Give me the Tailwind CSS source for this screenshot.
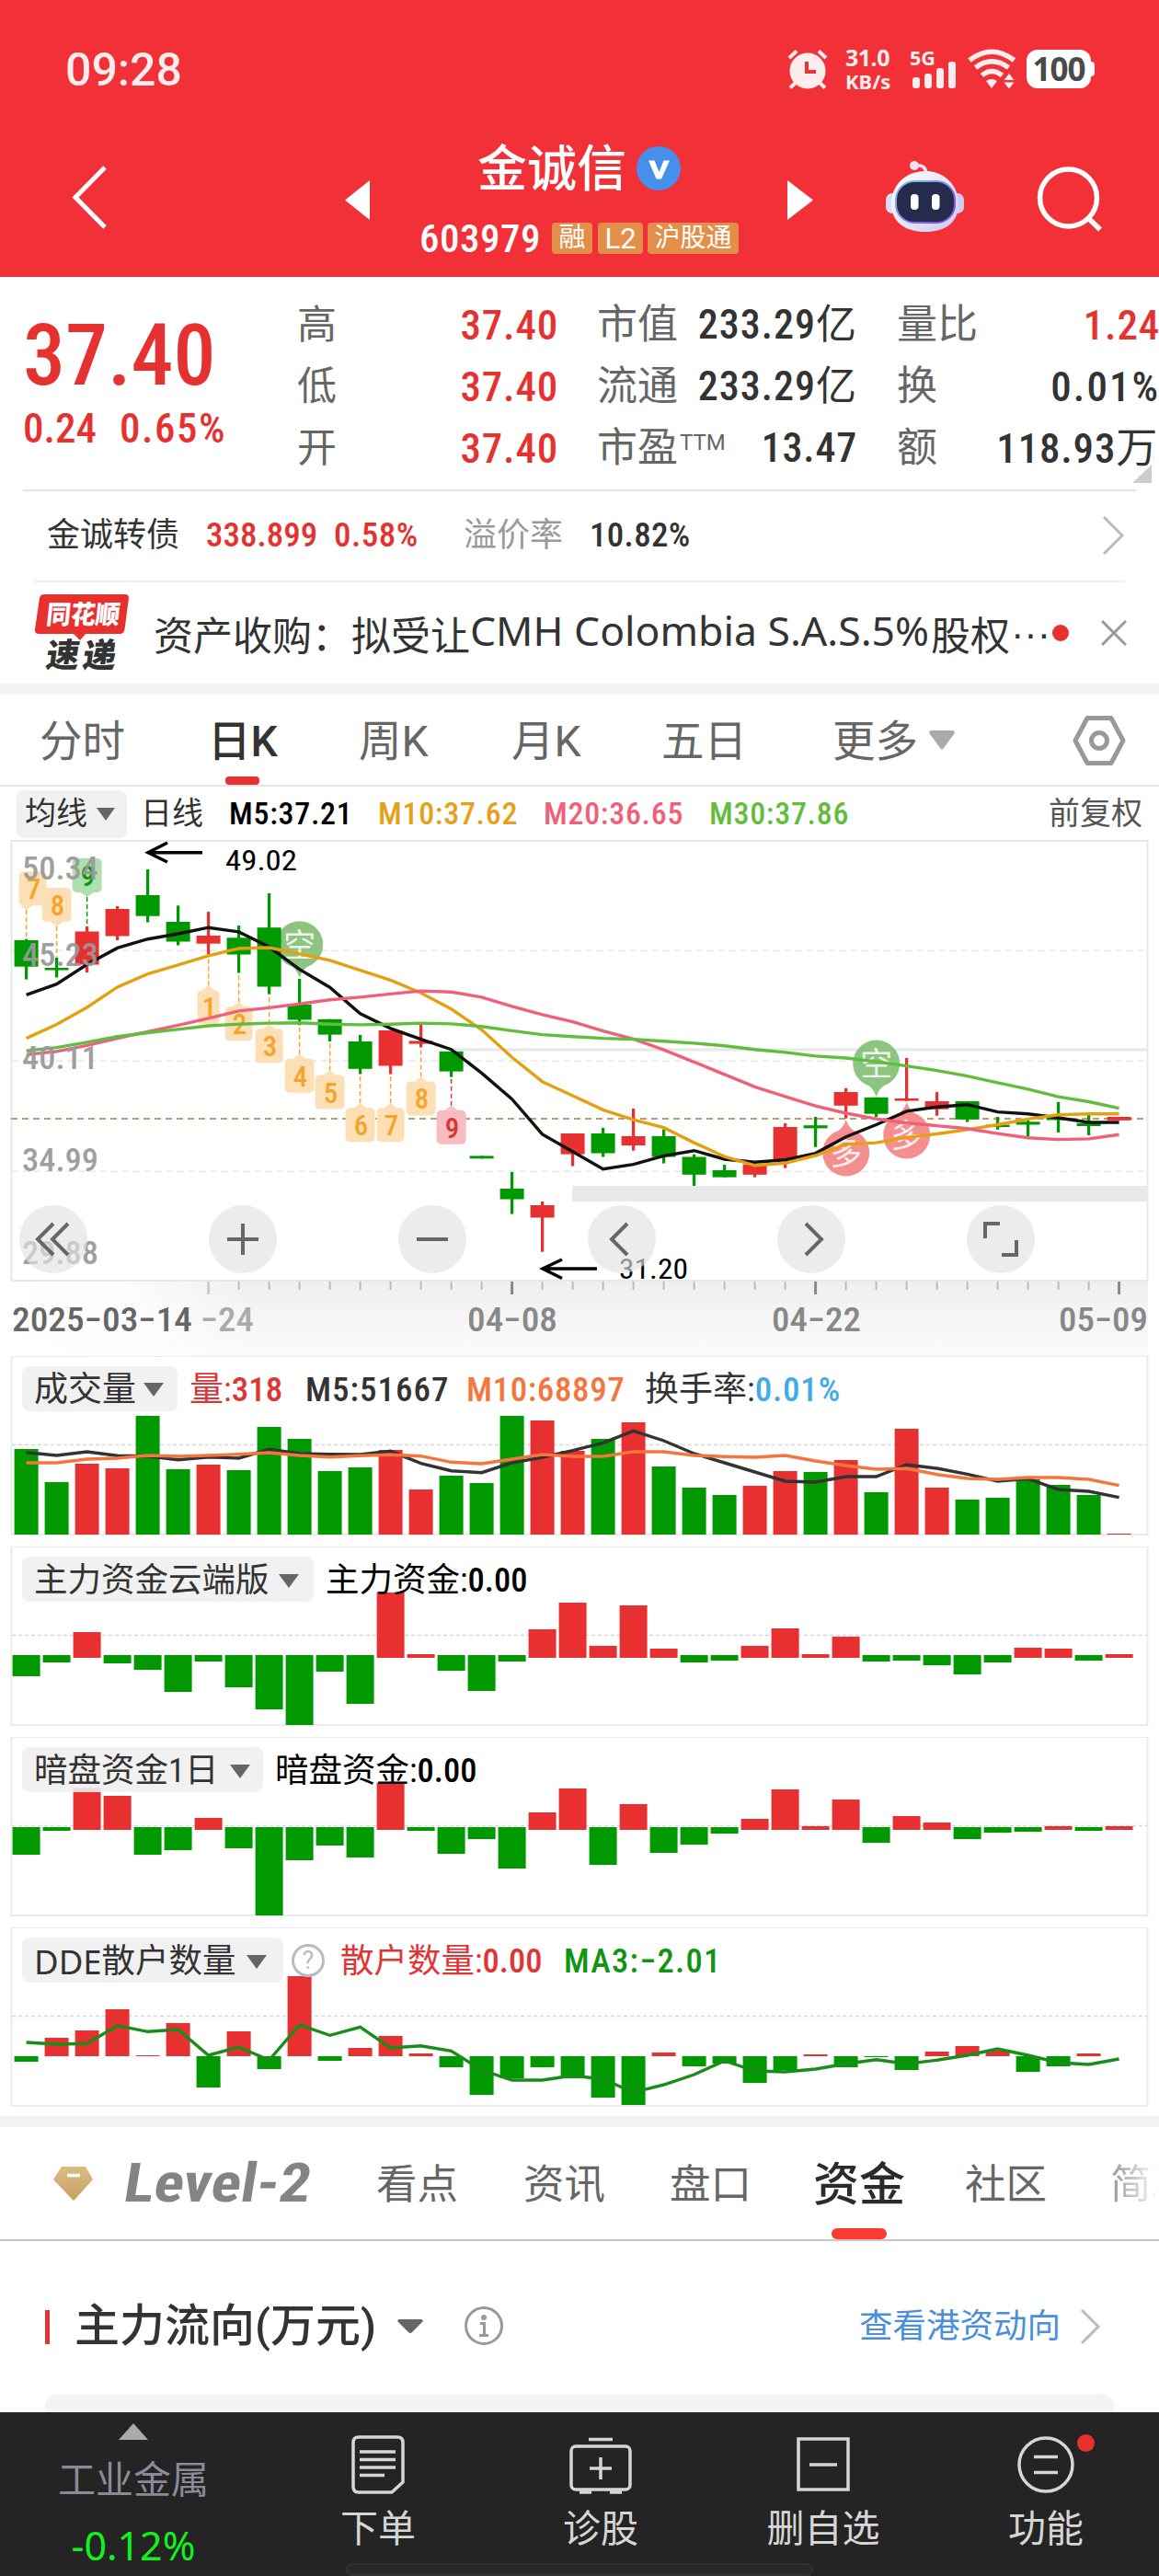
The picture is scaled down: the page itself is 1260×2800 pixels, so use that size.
<!DOCTYPE html>
<html lang="zh-CN">
<head>
    <meta charset="UTF-8">
    <meta name="viewport" content="width=device-width, initial-scale=1.0">
    <title>金诚信 603979</title>
    <script src="https://cdn.jsdelivr.net/npm/@tailwindcss/browser@4"></script>
</head>
<body class="bg-white font-['Roboto','Noto_Sans_CJK_SC',sans-serif] font-stretch-75% text-[#333] w-[1260px] h-[2800px] overflow-hidden flex flex-col whitespace-nowrap">

    <!-- Status bar + title -->
    <header class="h-[301px] shrink-0 bg-[#f23038] text-white">
        <div class="h-[150px] flex items-start">
            <div class="ml-[71px] mt-[46px] w-[140px] text-[50px] leading-[60px] font-medium font-stretch-100% text-[#ffedee]">09:28</div>
            <svg class="ml-[644px] mt-[53px] w-[46px] h-[46px]" viewBox="0 0 46 46" fill="none" stroke="#ffedee" stroke-width="5" stroke-linecap="butt">
                <circle cx="23" cy="24" r="19.5" fill="#ffedee" stroke="none"/>
                <path d="M3 10L11 2.500M43 10L35 2.500M4 42.500L12 35M42 42.500L34 35" stroke-width="4"/>
                <path d="M22 14v11h10" stroke="#f23038" stroke-width="4"/>
            </svg>
            <div class="ml-[18px] mt-[50px] w-[62px] text-[25px] leading-[25px] font-bold font-stretch-100% font-['Noto_Sans'] tracking-[-0.5px] text-[#ffedee]">31.0<br><span class="text-[22px] tracking-normal">KB/s</span></div>
            <svg class="ml-[8px] mt-[53px] w-[54px] h-[44px] overflow-visible" viewBox="0 0 54 44">
                <text x="0" y="18" fill="#ffedee" class="font-['Noto_Sans'] text-[22px] font-bold font-stretch-100%" textLength="28" lengthAdjust="spacingAndGlyphs">5G</text>
                <g fill="#ffedee"><rect x="3" y="31" width="8" height="12" rx="3"/><rect x="16" y="27" width="8" height="16" rx="3"/><rect x="29" y="21" width="8" height="22" rx="3"/><rect x="42" y="14" width="8" height="29" rx="3"/></g>
            </svg>
            <svg class="ml-[9px] mt-[53px] w-[54px] h-[44px]" viewBox="0 0 54 44" fill="none" stroke="#ffedee" stroke-width="5.500">
                <path d="M2 12.500Q26 -6 50.500 12.500M8.500 20.500Q26 7 44.500 20.500M15.500 29Q26 20 37.500 29"/>
                <path d="M20 35q6-4 12 0l-6 8zM39.500 34l5.500-7 5.500 7zM39.500 36.500h11l-5.500 7z" fill="#ffedee" stroke="none"/>
            </svg>
            <div class="ml-[10px] mt-[54px] flex items-center">
                <div class="w-[70px] h-[42px] rounded-[12px] bg-white text-[#4a4a4a] text-[35px] leading-[42px] text-center font-bold font-stretch-100% font-['Noto_Sans'] tracking-[-1px]">100</div>
                <div class="w-[4px] h-[16px] bg-white rounded-r-[4px]"></div>
            </div>
        </div>

        <div class="h-[150px] flex items-start">
            <svg class="ml-[75px] mt-[28px] w-[44px] h-[72px]" viewBox="0 0 44 72" fill="none" stroke="#fff" stroke-width="5"><path d="M39 4L7 36.500L39 69"/></svg>
            <svg class="ml-[256px] mt-[46px] w-[27px] h-[43px]" viewBox="0 0 27 43" fill="#fff"><path d="M27 0v43L0 21.500z"/></svg>
            <div class="ml-[52px] w-[350px] flex flex-col">
                <div class="flex items-center h-[66px] pl-[65px]">
                    <span class="mt-[4px] text-[54px] leading-[66px] font-medium">金诚信</span>
                    <svg class="ml-[11px] w-[48px] h-[48px]" viewBox="0 0 48 48"><circle cx="24" cy="24" r="24" fill="#4690ec"/><path d="M13 15.500h6.500l5 12.500 5-12.500h6.500l-9 20h-5.500z" fill="#fff"/></svg>
                </div>
                <div class="flex items-center mt-[24px] h-[38px]">
                    <span class="w-[146px] pl-[2px] text-[43px] leading-[38px] font-medium tracking-[0.5px]">603979</span>
                    <span class="w-[44px] h-[34px] rounded-[4px] bg-[#e38f4a] text-[29px] leading-[33px] text-center">融</span>
                    <span class="ml-[6px] w-[49px] h-[34px] rounded-[4px] bg-[#e38f4a] text-[31px] leading-[35px] text-center font-stretch-90%">L2</span>
                    <span class="ml-[5px] w-[99px] h-[34px] rounded-[4px] bg-[#e38f4a] text-[28px] leading-[33px] text-center">沪股通</span>
                </div>
            </div>
            <svg class="ml-[52px] mt-[46px] w-[28px] h-[43px]" viewBox="0 0 28 43" fill="#fff"><path d="M0 0v43L28 21.500z"/></svg>
            <svg class="ml-[79px] mt-[24px] w-[86px] h-[79px]" viewBox="0 0 86 79">
                <defs>
                    <linearGradient id="shell" x1="0" y1="0" x2="1" y2="1"><stop offset="0" stop-color="#fff"/><stop offset=".55" stop-color="#e6e4f8"/><stop offset="1" stop-color="#cfc6ee"/></linearGradient>
                    <linearGradient id="rim" x1="0" y1="0" x2="1" y2="1"><stop offset="0" stop-color="#7fd0e8"/><stop offset="1" stop-color="#7a3be0"/></linearGradient>
                </defs>
                <path d="M31 6q13-2 13 10" fill="none" stroke="#e9e4f6" stroke-width="3.500"/>
                <circle cx="31" cy="6" r="5" fill="#e9e4f6"/>
                <rect x="0" y="36" width="16" height="22" rx="7" fill="#dcdcf4"/><rect x="69" y="36" width="16" height="22" rx="7" fill="#cfcbee"/>
                <path d="M43 12C22 12 8 26 6 44c-2 20 12 34 37 34s38-14 36-34C77 26 63 12 43 12z" fill="url(#shell)"/>
                <rect x="11" y="23" width="64" height="45" rx="20" fill="#242b4d" stroke="url(#rim)" stroke-width="2"/>
                <rect x="27" y="37" width="8.500" height="17" rx="4" fill="#fff"/><rect x="50" y="37" width="8.500" height="17" rx="4" fill="#fff"/>
            </svg>
            <svg class="ml-[77px] mt-[30px] w-[74px] h-[72px]" viewBox="0 0 74 72" fill="none" stroke="#fff" stroke-width="5.500"><circle cx="35.500" cy="35" r="31"/><path d="M57 57l13 12.500"/></svg>
        </div>
    </header>

    <!-- Quote summary -->
    <section class="h-[233px] shrink-0 flex relative border-b-2 border-[#e3e3e3] mx-[25px]">
        <div class="w-[299px] text-[#e63131]">
            <div class="mt-[38px] text-[92px] leading-[96px] font-medium">37.40</div>
            <div class="mt-[7px] flex text-[45px] leading-[48px] font-medium"><span class="w-[105px]">0.24</span><span class="tracking-[1.5px]">0.65%</span></div>
        </div>
        <div class="-ml-[1px] w-[284px] pt-[19px] text-[45px] leading-[67px]">
            <div class="flex justify-between"><span class="text-[#666] text-[43px]">高</span><span class="text-[#e63131] font-medium tracking-[0.8px]">37.40</span></div>
            <div class="flex justify-between"><span class="text-[#666] text-[43px]">低</span><span class="text-[#e63131] font-medium tracking-[0.8px]">37.40</span></div>
            <div class="flex justify-between"><span class="text-[#666] text-[43px]">开</span><span class="text-[#e63131] font-medium tracking-[0.8px]">37.40</span></div>
        </div>
        <div class="ml-[42px] w-[283px] pt-[19px] text-[44px] leading-[67px]">
            <div class="flex justify-between"><span class="text-[#666]">市值</span><span class="font-medium tracking-[1px]">233.29<span class="font-normal">亿</span></span></div>
            <div class="flex justify-between"><span class="text-[#666]">流通</span><span class="font-medium tracking-[1px]">233.29<span class="font-normal">亿</span></span></div>
            <div class="flex justify-between"><span class="text-[#666] flex">市盈<span class="text-[24px] leading-[54px] font-stretch-100% ml-[2px]">TTM</span></span><span class="font-medium tracking-[0.8px]">13.47</span></div>
        </div>
        <div class="ml-[43px] -mr-[27px] w-[286px] shrink-0 pt-[19px] text-[45px] leading-[67px]">
            <div class="flex justify-between"><span class="text-[#666] text-[44px]">量比</span><span class="text-[#e63131] font-medium tracking-[0.8px]">1.24</span></div>
            <div class="flex justify-between"><span class="text-[#666] text-[44px]">换</span><span class="font-medium tracking-[2px]">0.01%</span></div>
            <div class="flex justify-between pr-[2px]"><span class="text-[#666] text-[44px]">额</span><span class="font-medium tracking-[0.8px]">118.93<span class="font-normal">万</span></span></div>
        </div>
        <svg class="absolute left-[1206px] top-[204px] w-[21px] h-[20px]" viewBox="0 0 21 20"><path d="M21 0v20H0z" fill="#ccc"/></svg>
    </section>

    <!-- Convertible bond -->
    <section class="h-[99px] shrink-0 mx-[37px] border-b-2 border-[#eee] flex items-center text-[37px] pb-[2px]">
        <span class="ml-[14px] w-[173px] text-[36px]">金诚转债</span>
        <span class="w-[139px] text-[#e63131] font-medium">338.899</span>
        <span class="w-[141px] text-[#e63131] font-medium tracking-[0.5px]">0.58%</span>
        <span class="w-[137px] text-[36px] text-[#999]">溢价率</span>
        <span class="font-medium tracking-[0.3px]">10.82%</span>
        <svg class="ml-auto w-[26px] h-[42px]" viewBox="0 0 26 42" fill="none" stroke="#bbb" stroke-width="3"><path d="M3 1l20 20L3 41"/></svg>
    </section>

    <!-- News ticker -->
    <section class="h-[110px] shrink-0 flex items-center">
        <svg class="ml-[36px] w-[106px] h-[86px] shrink-0 overflow-visible" viewBox="0 0 106 86">
            <path d="M12 1h88q4 0 4 4l-4.500 34q-1 5-5 5H57l-6 7-7-7H7q-6 0-5-5L7 5q1-4 5-4z" fill="#e8302f"/>
            <text x="17" y="33" fill="#fff" transform="skewX(-6)" textLength="80" lengthAdjust="spacingAndGlyphs" class="text-[28px] font-black">同花顺</text>
            <text x="24" y="80" fill="#333" transform="skewX(-8)" textLength="76" class="text-[36px] font-black">速递</text>
        </svg>
        <span class="ml-[25px] w-[972px] shrink-0 flex items-center text-[43px] font-['Noto_Sans_CJK_SC']">资产收购：拟受让<svg class="w-[501px] h-[60px] shrink-0" viewBox="0 0 501 60"><text x="0" y="44" fill="#333" class="text-[43px] font-['Noto_Sans']" textLength="499" lengthAdjust="spacingAndGlyphs">CMH Colombia S.A.S.5%</text></svg>股权<span class="ml-[1px] font-['Liberation_Sans']">···</span></span>
        <span class="ml-[5px] w-[18px] h-[18px] rounded-full bg-[#e8302f]"></span>
        <svg class="ml-[35px] w-[28px] h-[28px]" viewBox="0 0 28 28" stroke="#999" stroke-width="3"><path d="M1 1l26 26M27 1L1 27"/></svg>
    </section>
    <div class="h-[12px] shrink-0 bg-[#f4f4f4]"></div>

    <!-- Period tabs -->
    <nav class="h-[100px] shrink-0 flex border-b-2 border-[#e6e6e6] text-[46.500px] leading-[103px] text-[#666] font-stretch-90%">
        <span class="ml-[43px] w-[183px]">分时</span>
        <span class="w-[164px] font-medium text-[#333] relative">日K<i class="absolute left-[19px] bottom-0 w-[37px] h-[9px] rounded-[4px] bg-[#e8302f]"></i></span>
        <span class="w-[166px]">周K</span>
        <span class="w-[163px]">月K</span>
        <span class="w-[186px]">五日</span>
        <span class="w-[105px]">更多</span>
        <svg class="mt-[39px] w-[28px] h-[21px]" viewBox="0 0 28 21"><path d="M2 0h24q3 1 1 4L16 19q-2 3-4 0L1 4Q-1 1 2 0z" fill="#aaa"/></svg>
        <svg class="ml-[127px] mt-[22px] w-[60px] h-[56px]" viewBox="0 0 60 56" fill="none" stroke="#999" stroke-width="5" stroke-linejoin="round"><path d="M17 3.500h26L56 28 43 52.500H17L4 28z"/><circle cx="30" cy="28" r="8.500"/></svg>
    </nav>

    <!-- Moving average legend -->
    <div class="h-[57px] shrink-0 flex items-center text-[34px] pt-[2px]">
        <span class="ml-[18px] w-[120px] h-[52px] rounded-[8px] bg-[#f1f1f1] pl-[9px] flex items-center">均线<svg class="ml-[10px] w-[20px] h-[14px]" viewBox="0 0 20 14"><path d="M0 0h20L10 14z" fill="#666"/></svg></span>
        <span class="ml-[15px] w-[96px]">日线</span>
        <span class="w-[162px] text-black text-[34px] font-medium tracking-[0.7px]">M5:37.21</span>
        <span class="w-[180px] text-[#e5a11a] text-[34px] font-medium tracking-[0.7px]">M10:37.62</span>
        <span class="w-[180px] text-[#f0607a] text-[34px] font-medium tracking-[0.7px]">M20:36.65</span>
        <span class="w-[180px] text-[#62bd3f] text-[34px] font-medium tracking-[0.7px]">M30:37.86</span>
        <span class="ml-auto mr-[18px] text-[#555]">前复权</span>
    </div>

    <!-- Candlestick chart -->
    <section class="relative h-[562px] shrink-0">
        <svg id="kline" class="block w-[1260px] h-[562px]" viewBox="0 0 1260 562"></svg>
        <div class="absolute left-[21px] top-[398px] flex gap-[132px]">
            <div class="w-[74px] h-[74px] rounded-full bg-[#e2e2e2]/65"><svg viewBox="0 0 74 74" fill="none" stroke="#666" stroke-width="4"><path d="M37 20L20 37l17 17M53 20L36 37l17 17"/></svg></div>
            <div class="w-[74px] h-[74px] rounded-full bg-[#e2e2e2]/65"><svg viewBox="0 0 74 74" fill="none" stroke="#666" stroke-width="4"><path d="M37 20v34M20 37h34"/></svg></div>
            <div class="w-[74px] h-[74px] rounded-full bg-[#e2e2e2]/65"><svg viewBox="0 0 74 74" fill="none" stroke="#666" stroke-width="4"><path d="M20 37h34"/></svg></div>
            <div class="w-[74px] h-[74px] rounded-full bg-[#e2e2e2]/65"><svg viewBox="0 0 74 74" fill="none" stroke="#666" stroke-width="4"><path d="M43 20L26 37l17 17"/></svg></div>
            <div class="w-[74px] h-[74px] rounded-full bg-[#e2e2e2]/65"><svg viewBox="0 0 74 74" fill="none" stroke="#666" stroke-width="4"><path d="M31 20l17 17-17 17"/></svg></div>
            <div class="w-[74px] h-[74px] rounded-full bg-[#e2e2e2]/65"><svg viewBox="0 0 74 74" fill="none" stroke="#666" stroke-width="4"><path d="M20 36V20h16M54 38v16H38"/></svg></div>
        </div>
    </section>

    <!-- Indicator panels -->
    <section class="relative h-[207px] shrink-0">
        <svg id="volume" class="block w-[1260px] h-[196px]" viewBox="0 0 1260 196"></svg>
        <div class="absolute left-[24px] top-[11px] h-[49px] flex items-center text-[37px]">
            <span class="w-[169px] h-[49px] rounded-[8px] bg-[#efefef]/90 pl-[13px] pt-[2px] flex items-center">成交量<svg class="ml-[8px] w-[22px] h-[15px]" viewBox="0 0 22 15"><path d="M0 0h22L11 15z" fill="#666"/></svg></span>
            <span class="ml-[13px] w-[126px] text-[#e03535] pt-[2px]">量:<span class="font-medium">318</span></span>
            <span class="w-[175px] pt-[2px] font-medium tracking-[1px]">M5:51667</span>
            <span class="w-[194px] pt-[2px] font-medium tracking-[0.6px] text-[#f4753d]">M10:68897</span>
            <span class="pt-[2px]">换手率:<span class="text-[#3fabe8] font-medium tracking-[0.8px]">0.01%</span></span>
        </div>
    </section>
    <section class="relative h-[207px] shrink-0">
        <svg id="mainfund" class="block w-[1260px] h-[196px]" viewBox="0 0 1260 196"></svg>
        <div class="absolute left-[24px] top-[11px] h-[49px] flex items-center text-[36.500px] text-black">
            <span class="w-[317px] h-[49px] rounded-[8px] bg-[#efefef]/90 pl-[13px] pt-[3px] flex items-center text-[#333]">主力资金云端版<svg class="ml-[10px] w-[22px] h-[15px]" viewBox="0 0 22 15"><path d="M0 0h22L11 15z" fill="#666"/></svg></span>
            <span class="ml-[13px] pt-[3px]">主力资金:<span class="font-medium">0.00</span></span>
        </div>
    </section>
    <section class="relative h-[207px] shrink-0">
        <svg id="darkfund" class="block w-[1260px] h-[196px]" viewBox="0 0 1260 196"></svg>
        <div class="absolute left-[24px] top-[11px] h-[49px] flex items-center text-[36.500px] text-black">
            <span class="w-[262px] h-[49px] rounded-[8px] bg-[#efefef]/90 pl-[13px] pt-[3px] flex items-center text-[#333]">暗盘资金1日<svg class="ml-[12px] w-[22px] h-[15px]" viewBox="0 0 22 15"><path d="M0 0h22L11 15z" fill="#666"/></svg></span>
            <span class="ml-[13px] pt-[3px]">暗盘资金:<span class="font-medium">0.00</span></span>
        </div>
    </section>
    <section class="relative h-[205px] shrink-0">
        <svg id="dde" class="block w-[1260px] h-[196px]" viewBox="0 0 1260 196"></svg>
        <div class="absolute left-[24px] top-[11px] h-[49px] flex items-center text-[36.500px]">
            <span class="w-[284px] h-[49px] rounded-[8px] bg-[#efefef]/90 pl-[13px] pt-[3px] flex items-center"><span class="font-['Noto_Sans']">DDE</span>散户数量<svg class="ml-[11px] w-[22px] h-[15px]" viewBox="0 0 22 15"><path d="M0 0h22L11 15z" fill="#666"/></svg></span>
            <span class="ml-[9px] w-[36px] h-[36px] rounded-full border-[3px] border-[#bbb] text-[#bbb] text-[27px] leading-[30px] text-center font-stretch-100%">?</span>
            <span class="ml-[17px] w-[243px] text-[#e03535] pt-[3px]">散户数量:<span class="font-medium">0.00</span></span>
            <span class="text-[#119411] font-medium tracking-[1.3px] pt-[3px]">MA3:−2.01</span>
        </div>
    </section>
    <div class="h-[12px] shrink-0 bg-[#f4f4f4]"></div>

    <!-- Content tabs -->
    <nav class="h-[124px] shrink-0 border-b-2 border-[#c8c8c8] flex text-[44.500px] leading-[127px] text-[#666] overflow-hidden">
        <svg class="ml-[57px] mt-[41px] w-[46px] h-[40px] shrink-0" viewBox="0 0 46 40"><defs><linearGradient id="gold" x1="0" y1="0" x2="0" y2="1"><stop offset="0" stop-color="#dcbb85"/><stop offset="1" stop-color="#c9a063"/></linearGradient></defs><path d="M10 2h26l8 14L25 37q-2 3-4 0L1 16z" fill="url(#gold)"/><path d="M16 11.500h14" stroke="#fff" stroke-width="3.500"/></svg>
        <svg class="ml-[27px] mt-[33px] w-[212px] h-[56px] shrink-0 overflow-visible" viewBox="0 0 212 56"><text x="10" y="48" transform="skewX(-9)" fill="#848484" textLength="203" lengthAdjust="spacingAndGlyphs" class="text-[59px] font-bold">Level-2</text></svg>
        <span class="ml-[67px] w-[160px] shrink-0">看点</span>
        <span class="w-[159px] shrink-0">资讯</span>
        <span class="w-[156px] shrink-0">盘口</span>
        <span class="w-[165px] shrink-0 text-[50px] font-medium text-[#2b2b2b] relative">资金<i class="absolute left-[20px] bottom-0 w-[60px] h-[12px] rounded-[6px] bg-[#fc3b30]"></i></span>
        <span class="w-[158px] shrink-0">社区</span>
        <span class="w-[53px] overflow-hidden bg-linear-to-r from-[#999] to-[#fff] bg-clip-text text-transparent">简况</span>
    </nav>

    <!-- Fund flow -->
    <section class="h-[186px] shrink-0 flex flex-col">
        <div class="h-[166px] shrink-0 pt-[20px] flex items-center">
            <i class="ml-[49px] w-[5px] h-[37px] bg-[#e03535]"></i>
            <span class="ml-[27px] text-[49px] font-medium font-stretch-90%">主力流向(万元)</span>
            <svg class="ml-[23px] w-[28px] h-[16px]" viewBox="0 0 28 16"><path d="M2 0h24q3 1 1 3L16 14q-2 2-4 0L1 3Q-1 1 2 0z" fill="#666"/></svg>
            <svg class="ml-[44px] w-[44px] h-[44px]" viewBox="0 0 44 44" fill="none" stroke="#999" stroke-width="3"><circle cx="22" cy="21" r="19.500"/><circle cx="22" cy="12" r="3" fill="#999" stroke="none"/><path d="M18 18.500h4.500V31M17 31.500h10"/></svg>
            <span class="ml-auto text-[36.500px] text-[#4a8fdc]">查看港资动向</span>
            <svg class="ml-[20px] mr-[63px] w-[24px] h-[38px]" viewBox="0 0 24 38" fill="none" stroke="#bbb" stroke-width="3"><path d="M3 1l18 18L3 37"/></svg>
        </div>
        <div class="mx-[49px] h-[20px] rounded-t-[14px] bg-[#f4f4f4]"></div>
    </section>

    <!-- Bottom bar -->
    <footer class="relative h-[179px] shrink-0 bg-[#242424] text-[#d6d6d6] text-[41px] flex">
        <div class="w-[290px] flex flex-col items-center">
            <svg class="mt-[12px] w-[32px] h-[18px]" viewBox="0 0 32 18"><path d="M16 0l16 18H0z" fill="#aaa"/></svg>
            <span class="mt-[14px] leading-[60px] text-[#8b8a96]">工业金属</span>
            <span class="mt-[11px] leading-[60px] text-[#12f21c] text-[43px] font-['Noto_Sans']">-0.12%</span>
        </div>
        <div class="w-[242px] flex flex-col items-center">
            <svg class="mt-[24px] w-[60px] h-[66px]" viewBox="0 0 60 66" fill="none" stroke="#d6d6d6" stroke-width="3.500" stroke-linejoin="round"><path d="M9 3h42q6 0 6 6v43L45 63H9q-6 0-6-6V9q0-6 6-6z"/><path d="M10 19h39M10 27.500h39M10 36h39M10 44.500h27"/></svg>
            <span class="mt-[7px] leading-[60px]">下单</span>
        </div>
        <div class="w-[242px] flex flex-col items-center">
            <svg class="mt-[24px] w-[70px] h-[66px]" viewBox="0 0 70 66" fill="none" stroke="#d6d6d6" stroke-width="3.500"><rect x="3" y="13" width="64" height="47" rx="5"/><path d="M22 5.500h26M35 25v24M23 37h24M12 63h13M45 63h13" /></svg>
            <span class="mt-[7px] leading-[60px]">诊股</span>
        </div>
        <div class="w-[242px] flex flex-col items-center">
            <svg class="mt-[24px] w-[60px] h-[66px]" viewBox="0 0 60 66" fill="none" stroke="#d6d6d6" stroke-width="3.500"><rect x="3" y="5" width="54" height="55"/><path d="M15 33h30"/></svg>
            <span class="mt-[7px] leading-[60px]">删自选</span>
        </div>
        <div class="w-[242px] flex flex-col items-center relative">
            <svg class="mt-[23px] w-[64px] h-[66px]" viewBox="0 0 64 66" fill="none" stroke="#d6d6d6" stroke-width="3.500"><circle cx="32" cy="34" r="29"/><path d="M19 25.500h26M19 42.500h26"/></svg>
            <i class="absolute left-[155px] top-[24px] w-[19px] h-[19px] rounded-full bg-[#e8302f]"></i>
            <span class="mt-[8px] leading-[60px]">功能</span>
        </div>
        <div class="absolute left-[376px] bottom-[1px] w-[508px] h-[14px] rounded-full bg-[#292929] border-2 border-[#323232]"></div>
    </footer>

    <script>
        const RED = '#e83030', GREEN = '#009900';
        const cx = i => 28.6 + i * 33;
        const line = (ys, color, w) => `<polyline fill="none" stroke="${color}" stroke-width="${w}" points="${ys.map((y, i) => cx(i).toFixed(1) + ',' + y).join(' ')}"/>`;

        // [high, low, body top, body bottom, up?]
        const candles = [
            [108.7,152.6,110,138.7,0],[129,150.5,140,142.5,0],[95,145,100.5,136.5,1],[73,110,76,105.5,1],[33,90.5,61,83.7,0],
            [72.3,115.5,90,111.5,0],[79,125.5,105,113.7,1],[94,145.5,107.3,125.5,0],[59,168.7,96.2,160.5,0],[152,202.3,179.8,196.5,0],
            [195.8,220,195.8,212.6,0],[213,255.5,220,249.8,0],[208,255.5,208,246.5,1],[201.5,226.5,219.4,222.6,1],[230.8,258.7,230.8,252.6,0],
            [344.4,347.3,344.4,347.3,0],[362,407.6,380,391.5,0],[394,448.7,398,411.5,1],[320,355.5,320,342.6,1],[314,345.5,320,341.5,0],
            [293,338.7,323,333,1],[315.5,352.6,323,345.5,0],[342.6,377,345.5,364.8,0],[354,367.6,360,367.6,0],[352,367.6,353.7,364.8,1],
            [309,357.6,313,348.7,1],[302,334.8,311.2,314.4,0],[270.8,303.7,275,289.8,1],[280.8,302,280.8,298.7,0],[238,284.8,282,283.7,1],
            [275,300.8,285,293.7,1],[285,307.6,285,304.8,0],[302,315.8,310.5,312.3,0],[306,323,307.3,310.5,0],[285.8,319,303,304.4,0],
            [299.4,322,309,312,0],[302,305.8,302,305.8,1]
        ];
        const m5 = [169.4,157.6,136.2,118.4,108.7,103,96.2,100.9,117.3,141.6,161.2,189.8,205.9,217.6,228.7,254.4,282.6,320.9,339.8,358.7,353.7,344.4,338.7,348,351.2,348.7,341.6,323.7,310.5,295.9,291.2,288.7,296.6,298.7,303,308,308];
        const m10 = [216.6,201.6,183,160.9,146.6,136.9,126.9,119,118,124.8,131.9,142.6,153.4,167.3,184.8,207.3,237.3,263.7,279,294.4,305.1,313.7,330.1,345.1,354.8,352.3,344,331.9,330.1,324.4,320.5,315.9,310.5,304.4,299.8,298.7,298.7];
        const m20 = [234.4,230.9,224.4,216.6,209.4,202.3,194.8,186.9,183.4,179.1,174.8,171.9,168.4,165.1,166.2,171.9,181.9,190.9,198.7,208.7,217.3,229.1,242.3,255.9,269.4,279.8,290.1,298,304.1,308.7,311.6,314.8,320.1,324.8,326.6,325.9,321.2];
        const m30 = [230.1,226.6,220.9,214.8,210.5,206.9,203,201.2,200.1,199.8,201.2,201.9,201.2,200.1,200.9,203.7,208.4,212.6,214.8,216.6,217.6,219.8,221.9,224.8,228.7,231.9,235.9,238,241.9,246.6,251.6,257.6,264.8,271.9,280.1,285.5,292.6];

        let k = `<defs><linearGradient id="axis" x1="0" y1="0" x2="0" y2="1"><stop offset="0" stop-color="#efefef"/><stop offset="1" stop-color="#fbfbfb"/></linearGradient>
            <linearGradient id="fade" x1="0" y1="0" x2="1" y2="0"><stop offset="0" stop-color="#fff"/><stop offset=".5" stop-color="#fff" stop-opacity=".8"/><stop offset="1" stop-color="#fff" stop-opacity="0"/></linearGradient></defs>
            <rect x="12" y="480" width="1236" height="82" fill="url(#axis)"/><rect x="12" y="481" width="260" height="81" fill="url(#fade)"/>
            <rect x="12.500" y="2" width="1235" height="478" fill="none" stroke="#e8e8e8" stroke-width="2"/>`;
        [121.2, 241.2, 361.2].forEach(y => k += `<path d="M13 ${y}H1247" stroke="#e6e6e6" stroke-width="1.500" stroke-dasharray="7 5"/>`);
        k += `<path d="M490 229H1248" stroke="#e8e8e8" stroke-width="3"/><rect x="622" y="377" width="626" height="17" fill="#e9e9e9"/>
            <path d="M12 304H1246" stroke="#b5a070" stroke-width="2" stroke-dasharray="7 5"/>`;

        // nine-turn sequence tags: index, digit, tip, candle edge, direction
        const tag = (i, n, tip, edge, up, w, bg, fg) => {
            const x = cx(i), top = up ? tip + 5 : tip - 42, dx = i === 0 ? 7 : 0;
            const p = up ? `M${x - 7} ${top}L${x} ${tip}L${x + 7} ${top}z` : `M${x - 7} ${top + 37}L${x} ${tip}L${x + 7} ${top + 37}z`;
            k += `<path d="M${x} ${tip}V${edge}" stroke="${fg}" stroke-width="1.500" stroke-dasharray="5 3"/>
                <g fill="${bg}"><path d="${p}"/><rect x="${x + dx - w / 2}" y="${top}" width="${w}" height="37" rx="5"/></g>
                <text x="${x + dx + 1}" y="${top + 30}" fill="${fg}" text-anchor="middle" class="text-[31px] font-medium">${n}</text>`;
        };
        const O = '#fddfb5', OF = '#f5a32b';
        tag(0, 7, 77.3, 108, false, 30, O, OF);
        tag(1, 8, 95, 129, false, 32, O, OF);
        tag(2, 9, 63, 95, false, 32, '#aedfae', '#119411');
        tag(6, 1, 159.4, 126, true, 24, O, OF);
        tag(7, 2, 177.3, 146, true, 30, O, OF);
        tag(8, 3, 201.2, 169, true, 30, O, OF);
        tag(9, 4, 233.7, 203, true, 32, O, OF);
        tag(10, 5, 251.6, 220, true, 32, O, OF);
        tag(11, 6, 287.3, 256, true, 32, O, OF);
        tag(12, 7, 287.3, 256, true, 30, O, OF);
        tag(13, 8, 258.4, 227, true, 32, O, OF);
        tag(14, 9, 289.8, 259, true, 32, '#f6bcc0', '#d93636');

        // buy / sell pins
        const pin = (x, y, ch, color, up) => {
            const s = up ? -1 : 1;
            k += `<g fill="${color}"><circle cx="${x}" cy="${y}" r="25.500"/><path d="M${x - 13} ${y + s * 21}Q${x - 3} ${y + s * 26} ${x} ${y + s * 36}Q${x + 3} ${y + s * 26} ${x + 13} ${y + s * 21}z"/></g>
                <text x="${x}" y="${y + 13}" fill="#fff" fill-opacity=".85" text-anchor="middle" class="text-[35px]">${ch}</text>`;
        };
        pin(325.7, 114.8, '空', '#8cc480', false);
        pin(952.7, 244, '空', '#8cc480', false);
        pin(919.7, 341, '多', '#f58e8e', true);
        pin(985.7, 322, '多', '#f58e8e', true);

        candles.forEach(([h, l, t, b, up], i) => {
            const c = up ? RED : GREEN;
            k += `<path d="M${cx(i)} ${h}V${l}" stroke="${c}" stroke-width="3.300"/><rect x="${cx(i) - 13}" y="${t}" width="26" height="${Math.max(b - t, 2.5)}" fill="${c}"/>`;
        });
        k += line(m5, '#111', 3.4) + line(m10, '#e5a011', 3.4) + line(m20, '#f0607a', 3.4) + line(m30, '#62bd3f', 3.4);

        [['50.34', 44.4], ['45.23', 138], ['40.11', 249.8], ['34.99', 360.5], ['29.88', 462]].forEach(([s, y]) =>
            k += `<text x="24" y="${y}" fill="#999" fill-opacity=".95" textLength="83" lengthAdjust="spacingAndGlyphs" class="text-[35px] font-medium">${s}</text>`);
        k += `<g fill="none" stroke="#000" stroke-width="3.500"><path d="M161 14.800H220M182 4L161 14.800L182 25"/><path d="M590 467H649M611 457L590 467L611 477.500"/></g>
            <text x="245" y="34" textLength="78" lengthAdjust="spacingAndGlyphs" class="text-[32px]">49.02</text>
            <text x="673" y="477.500" textLength="75" lengthAdjust="spacingAndGlyphs" class="text-[31px]">31.20</text>`;

        for (let i = 6; i < 37; i++) {
            const major = i % 10 === 6;
            k += `<path d="M${cx(i)} 481v${major ? 14 : 9}" stroke="${i === 6 ? '#ccc' : major ? '#888' : '#bbb'}" stroke-width="${major ? 3 : 2}"/>`;
        }
        [['2025−03−14', 13, 196, '#666'], ['−24', 218, 58, '#aaa'], ['04−08', 508, 98, '#888'], ['04−22', 839, 97, '#888'], ['05−09', 1151, 97, '#888']].forEach(([s, x, w, c]) =>
            k += `<text x="${x}" y="534.500" fill="${c}" textLength="${w}" lengthAdjust="spacingAndGlyphs" class="text-[36px] font-medium">${s}</text>`);
        document.getElementById('kline').innerHTML = k;

        const frame = `<rect x="12.500" y="0" width="1235" height="194" fill="none" stroke="#ebebeb" stroke-width="2"/><path d="M13 96.500H1247" stroke="#d8d8d8" stroke-width="1.500" stroke-dasharray="4 3"/>`;
        // bars grow up from upBase when positive, down from downBase when negative
        const bars = (vals, upBase, downBase, w) => vals.map((v, i) => v ? `<rect x="${cx(i) - w / 2}" y="${v > 0 ? upBase - v : downBase}" width="${w}" height="${Math.abs(v)}" fill="${v > 0 ? RED : GREEN}"/>` : '').join('');

        const vol = [93,57,77,72,129,71,76,70,117,104,69,73,92,49,64,56,129,124,91,104,122,74,51,43,53,69,68,81,46,115,51,38,40,60,54,43,1];
        const volUp = '0011001000001100011010001101011000001';
        document.getElementById('volume').innerHTML = frame +
            vol.map((v, i) => `<rect x="${cx(i) - 13}" y="${194 - v}" width="26" height="${v}" fill="${volUp[i] === '1' ? RED : GREEN}"/>`).join('') +
            line([104.7,108,104,108.3,108.7,112.7,109.7,111,101.3,106,106.7,107,103.3,116.7,124.7,126.7,116,110,102.7,94.3,81.3,92,106,116,126,136,137,131,131,118,122,128.3,136,133.3,145,147,153.7], '#333', 3.4) +
            line([116,116,112,111,108,109,108,106.7,105,108,109.7,108.3,107.3,108.7,115.3,117,112,107,109,109,104,104,108,109.3,110,108,114,119,123,122.3,128.7,133,134,132,132,134,140.7], '#f4753d', 3.4);
        document.getElementById('mainfund').innerHTML = frame +
            bars([-23,-8,28,-9,-16,-40,-7,-35,-59,-76,-18,-53,71,4,-17,-39,-7,31,60,13,57,10,-8,-6,13,32,4,23,-7,-6,-11,-21,-8,11,10,-6,4], 121, 118, 30);
        document.getElementById('darkfund').innerHTML = frame +
            bars([-30,-4,46,37,-30,-25,13,-23,-96,-36,-20,-33,51,-4,-29,-13,-45,19,45,-41,28,-28,-19,-7,12,44,4,33,-17,15,8,-13,-6,-5,4,-4,4], 101, 98, 30);
        document.getElementById('dde').innerHTML = frame +
            bars([-6,20,28,51,1,36,-34,27,-14,87,-5,9,22,3,-12,-42,-24,-12,-24,-45,-53,4,-11,-8,-29,-15,2,-12,-1,-15,5,11,7,-17,-11,3,0], 140, 140, 26) +
            line([125,127,126.3,106.7,113.3,111,139,130,144.3,106,117.3,108.3,131,128.7,134.3,155,166,166,161,165,179.3,171,160,145,156,157,154,148.3,143.7,148.3,144.3,139,132,139,147,149,143], '#1a8c1a', 3.4);
    </script>
</body>
</html>
